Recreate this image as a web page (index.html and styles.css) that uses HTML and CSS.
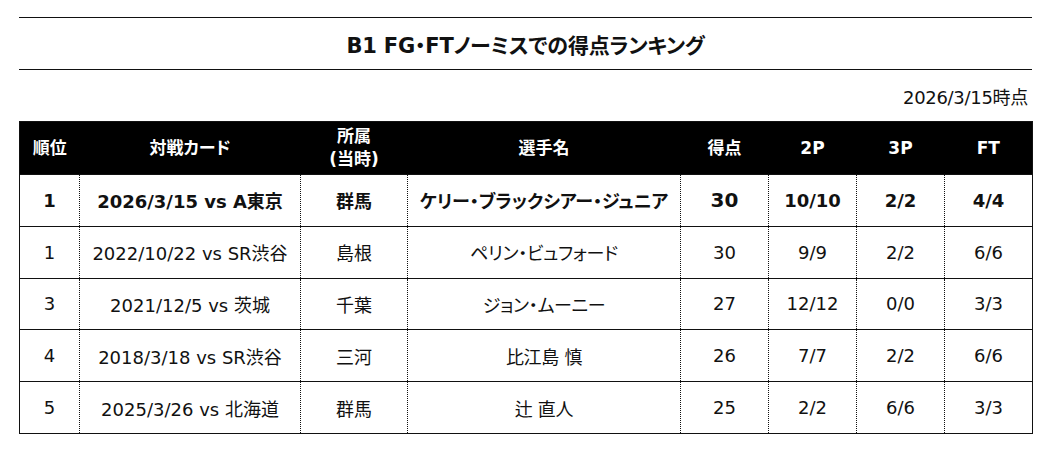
FILE: index.html
```html
<!DOCTYPE html>
<html lang="ja">
<head>
<meta charset="utf-8">
<link rel="stylesheet" href="styles.css">
</head>
<body>
<div class="page">
  <h1 class="title">B1 FG・FTノーミスでの得点ランキング</h1>
  <p class="asof">2026/3/15時点</p>
  <table class="rank">
    <colgroup>
      <col class="c-rank"><col class="c-game"><col class="c-team"><col class="c-name">
      <col class="c-num"><col class="c-num"><col class="c-num"><col class="c-num">
    </colgroup>
    <thead>
      <tr><th>順位</th><th>対戦カード</th><th>所属<br>(当時)</th><th>選手名</th><th>得点</th><th>2P</th><th>3P</th><th>FT</th></tr>
    </thead>
    <tbody>
      <tr class="hl"><td>1</td><td>2026/3/15 vs A東京</td><td>群馬</td><td>ケリー・ブラックシアー・ジュニア</td><td class="pts">30</td><td>10/10</td><td>2/2</td><td>4/4</td></tr>
      <tr><td>1</td><td>2022/10/22 vs SR渋谷</td><td>島根</td><td>ペリン・ビュフォード</td><td>30</td><td>9/9</td><td>2/2</td><td>6/6</td></tr>
      <tr><td>3</td><td>2021/12/5 vs 茨城</td><td>千葉</td><td>ジョン・ムーニー</td><td>27</td><td>12/12</td><td>0/0</td><td>3/3</td></tr>
      <tr><td>4</td><td>2018/3/18 vs SR渋谷</td><td>三河</td><td>比江島 慎</td><td>26</td><td>7/7</td><td>2/2</td><td>6/6</td></tr>
      <tr><td>5</td><td>2025/3/26 vs 北海道</td><td>群馬</td><td>辻 直人</td><td>25</td><td>2/2</td><td>6/6</td><td>3/3</td></tr>
    </tbody>
  </table>
</div>
</body>
</html>
```

FILE: styles.css
```css
html, body {
  margin: 0;
  padding: 0;
  background: #fff;
}
body {
  font-family: "DejaVu Sans", "Noto Sans CJK JP", sans-serif;
  font-feature-settings: "palt";
  color: #111;
}
.page {
  padding: 17px 23px 0 19px;
}
.title {
  margin: 0;
  height: 51px;
  border-top: 1px solid #111;
  border-bottom: 1px solid #111;
  display: flex;
  align-items: center;
  justify-content: center;
  font-size: 21px;
  font-weight: bold;
  letter-spacing: -0.2px;
}
.asof {
  margin: 0;
  height: 51px;
  display: flex;
  align-items: center;
  justify-content: flex-end;
  padding-right: 4px;
  font-size: 18px;
  letter-spacing: -0.3px;
}
.rank {
  width: 1013px;
  border-collapse: collapse;
  table-layout: fixed;
  border: 1px solid #111;
}
.c-rank { width: 60px; }
.c-game { width: 221px; }
.c-team { width: 107px; }
.c-name { width: 273px; }
.c-num { width: 88px; }
.rank th {
  background: #000;
  color: #fff;
  font-size: 17px;
  font-weight: bold;
  height: 52px;
  padding: 0;
  line-height: 23px;
  text-align: center;
}
.rank td {
  height: 50.8px;
  padding: 0;
  text-align: center;
  font-size: 18px;
  border-top: 1px solid #111;
  border-left: 1px dotted #111;
  white-space: nowrap;
}
.rank td:first-child {
  border-left: none;
}
.rank tr.hl td {
  font-weight: bold;
}
.rank tr.hl td.pts {
  font-size: 20px;
}
.rank td:nth-child(4) {
  letter-spacing: -0.3px;
}
.rank tr.hl td:nth-child(4) {
  letter-spacing: 0;
}
```
